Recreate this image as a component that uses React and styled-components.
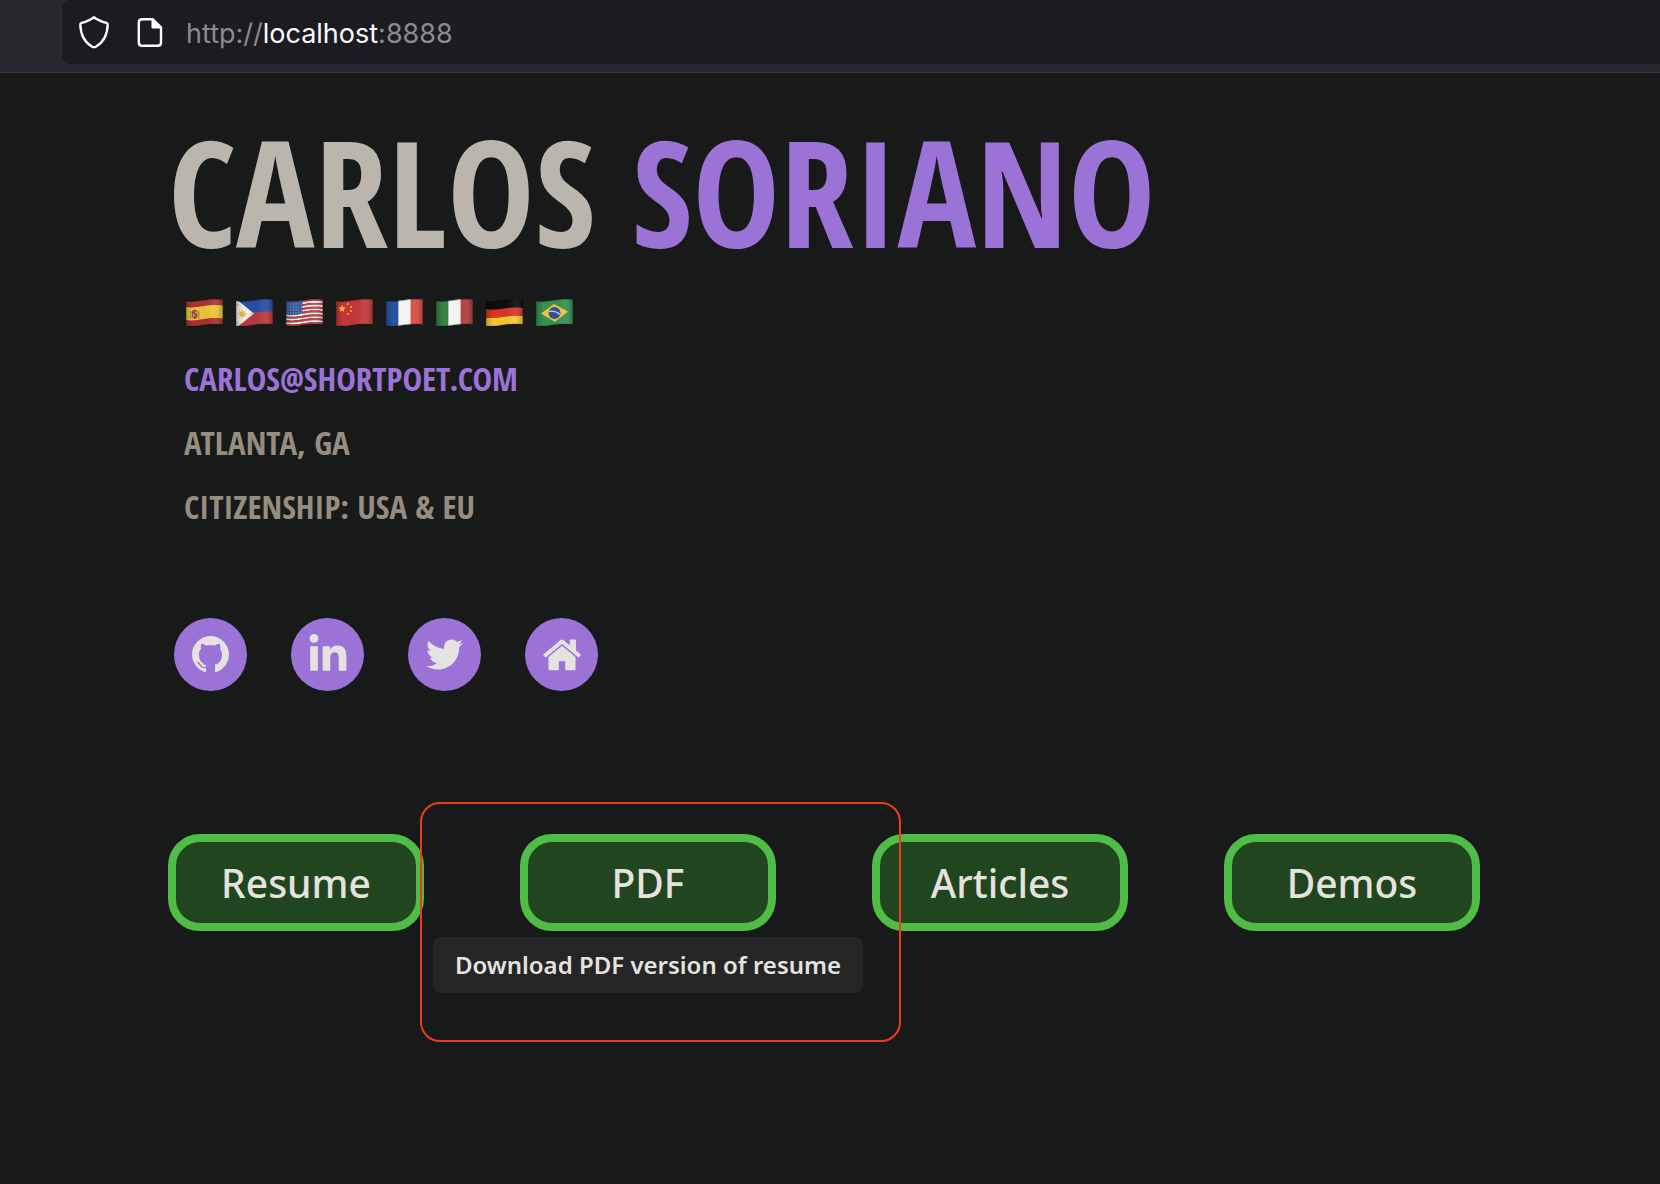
import React from "react";
import styled, { createGlobalStyle } from "styled-components";
import { FaLinkedinIn, FaTwitter } from "react-icons/fa";

const condensed = `"Saira Extra Condensed", "Open Sans Condensed", "Liberation Sans Narrow", sans-serif`;
const humanist = `"Noto Sans", "Open Sans", sans-serif`;

const GlobalStyle = createGlobalStyle`
  * { box-sizing: border-box; }
  body {
    margin: 0;
    background: #181a19;
    color: #e5e2df;
    font-family: ${humanist};
  }
`;

const Toolbar = styled.div`
  display: flex;
  height: 73px;
  padding: 0 0 8px 62px;
  background: #28272e;
  border-bottom: 1px solid #39383e;
`;

const AddressBar = styled.div`
  display: flex;
  flex: 1;
  align-items: center;
  gap: 24px;
  padding: 0 16px;
  background: #1c1b20;
  border-radius: 8px 0 0 8px;
`;

const PageInfo = styled.div`
  display: flex;
  align-items: center;
  gap: 20px;
`;

const ToolIcon = styled.svg`
  display: block;
  width: 32px;
  height: 36px;
  fill: none;
  stroke: #fbfbfe;
  stroke-width: 2;
  stroke-linejoin: round;
`;

const Address = styled.span`
  padding-top: 4px;
  font: 400 27px/36px Inter, "Liberation Sans", sans-serif;
  color: #8b8b8f;

  strong {
    font-weight: 400;
    color: #fbfbfe;
  }
`;

const Page = styled.main`
  padding: 36px 180px 140px 168px;
`;

const Name = styled.h1`
  margin: 0;
  font: 800 147px/164px ${condensed};
  color: #bab5ad;
  white-space: nowrap;
`;

const Surname = styled.span`
  color: #9b72d6;
`;

const Flags = styled.ul`
  display: flex;
  gap: 13px;
  margin: 26px 0 21px;
  padding: 0 18px;
  list-style: none;
`;

const FlagIcon = styled.svg`
  display: block;
  width: 37px;
  height: 27px;
`;

const Details = styled.address`
  display: flex;
  flex-direction: column;
  align-items: flex-start;
  padding: 0 16px;
  font: 400 33px/64px ${condensed};
  color: #968d81;
`;

const Email = styled.a`
  color: #9b72d6;
  text-decoration: none;
`;

const Socials = styled.nav`
  display: flex;
  gap: 44px;
  margin: 79px 0 143px;
  padding: 0 6px;
`;

const SocialLink = styled.a`
  display: grid;
  place-items: center;
  width: 73px;
  height: 73px;
  border-radius: 50%;
  background: #9b72d6;
  color: #e5e3df;
  font-size: ${(p) => p.$size}px;

  svg {
    display: block;
  }
`;

const Actions = styled.nav`
  display: flex;
  justify-content: space-between;
`;

const ActionSlot = styled.div`
  position: relative;
`;

const ActionLink = styled.a`
  display: block;
  width: 256px;
  border: 8px solid #4fbc46;
  border-radius: 32px;
  padding: 13px 0 12px;
  background: #21451f;
  color: #e5e2df;
  font-size: 39px;
  font-weight: 500;
  line-height: 56px;
  text-align: center;
  text-decoration: none;
`;

const Tooltip = styled.span`
  position: absolute;
  top: calc(100% + 6px);
  left: 50%;
  transform: translateX(-50%);
  padding: 10px 22px;
  border-radius: 8px;
  background: #242527;
  color: #e5e2df;
  font-size: 24px;
  font-weight: 600;
  line-height: 36px;
  white-space: nowrap;
`;

const Highlight = styled.span`
  position: absolute;
  inset: -32px -125px -111px -100px;
  border: 2px solid #ee3b1b;
  border-radius: 20px;
  pointer-events: none;
  z-index: 1;
`;

// A strip of cloth between two heights, both edges following the flag's wave.
const band = (top, bottom, left = 0, right = 37) =>
  `M${left} ${top + 2}` +
  `C${left + (right - left) * 0.34} ${top + 4} ${left + (right - left) * 0.56} ${top - 1.6} ${right} ${top + 0.6}` +
  `V${bottom + 0.6}` +
  `C${left + (right - left) * 0.56} ${bottom - 1.6} ${left + (right - left) * 0.34} ${bottom + 4} ${left} ${bottom + 2}Z`;

const rows = (colors) =>
  colors.map((c, i) => (
    <path key={i} d={band((25 * i) / colors.length, (25 * (i + 1)) / colors.length)} fill={c} />
  ));

const columns = (colors) =>
  colors.map((c, i) => <rect key={i} x={(37 * i) / 3} y="0" width="12.6" height="28" fill={c} />);

const usStripes = Array.from({ length: 13 }, (_, i) => (i % 2 ? "#f4f2f2" : "#c93a42"));

const flags = [
  {
    name: "Spain",
    art: (
      <>
        <path d={band(0, 25)} fill="#a93232" />
        <path d={band(6, 19)} fill="#edc63b" />
        <path d="M4 12h1.500v8H4zM12 12h1.500v8H12z" fill="#b98f6a" />
        <path d="M6 12q2.800-3 5.500 0v6q-2.700 4-5.500 0z" fill="#a4483c" />
        <path d="M9 12.500h1.700v2H9zM6.800 15.500h1.700v2H6.800z" fill="#c9b9a4" />
      </>
    ),
  },
  {
    name: "Philippines",
    art: (
      <>
        <path d={band(0, 13)} fill="#274fa8" />
        <path d={band(12.5, 25)} fill="#bd3840" />
        <path d="M0 0L18 14.500 0 29z" fill="#f3f0ec" />
        <circle cx="6.500" cy="15" r="2.600" fill="#e9b63a" />
        <path d="M6.500 10.500v9M2 15h9M3.300 11.800l6.400 6.400M9.700 11.800l-6.400 6.400" stroke="#e9b63a" strokeWidth="0.9" />
        <circle cx="1.800" cy="5.500" r="1" fill="#e9b63a" />
        <circle cx="1.800" cy="24.500" r="1" fill="#e9b63a" />
        <circle cx="15.500" cy="14.500" r="1" fill="#e9b63a" />
      </>
    ),
  },
  {
    name: "United States",
    art: (
      <>
        {rows(usStripes)}
        <path d="M0 0H16.500V14.600Q8 17 0 15.800z" fill="#325a9c" />
        <path
          d="M1.500 5H16M1.500 8H16M1.500 11H16M1.500 14H16"
          stroke="#a9bedb"
          strokeWidth="1"
          strokeDasharray="1 1.700"
        />
      </>
    ),
  },
  {
    name: "China",
    art: (
      <>
        <path d={band(0, 25)} fill="#c4373a" />
        <path d="M6 5.800l1 2.600 2.700.1-2.100 1.700.7 2.700L6 11.400l-2.300 1.500.7-2.700-2.100-1.700 2.700-.1z" fill="#f6d33c" />
        <g fill="#f0b83a">
          <circle cx="12" cy="5" r="1" />
          <circle cx="15" cy="8" r="1" />
          <circle cx="15" cy="12" r="1" />
          <circle cx="12" cy="15" r="1" />
        </g>
      </>
    ),
  },
  { name: "France", art: columns(["#27549f", "#fbfafa", "#dc4a3e"]) },
  { name: "Italy", art: columns(["#388349", "#fbfafa", "#b03b3d"]) },
  { name: "Germany", art: rows(["#0c0c0c", "#dc3426", "#f5c832"]) },
  {
    name: "Brazil",
    art: (
      <>
        <path d={band(0, 25)} fill="#36914f" />
        <path d="M5 14.500L18 5l14 7.500L19 23z" fill="#f2c43b" />
        <circle cx="18.500" cy="14" r="6" fill="#33509c" />
        <path d="M13 12.500q6-1.500 11 3" fill="none" stroke="#c4d6d8" strokeWidth="1.300" />
      </>
    ),
  },
];

function Flag({ name, index, children }) {
  const id = `cloth-${index}`;
  return (
    <FlagIcon viewBox="0 0 37 27" role="img" aria-label={name}>
      <defs>
        <clipPath id={id}>
          <path d={band(0, 25)} />
        </clipPath>
        <linearGradient id={`${id}-shade`}>
          <stop offset="0" stopColor="#000" stopOpacity="0.22" />
          <stop offset="0.2" stopColor="#000" stopOpacity="0" />
          <stop offset="0.5" stopColor="#000" stopOpacity="0.03" />
          <stop offset="0.75" stopColor="#fff" stopOpacity="0.06" />
          <stop offset="1" stopColor="#000" stopOpacity="0.25" />
        </linearGradient>
      </defs>
      <g clipPath={`url(#${id})`}>
        {children}
        <rect width="37" height="28" fill={`url(#${id}-shade)`} />
        <path d={band(0, 25)} fill="none" stroke="#000" strokeOpacity="0.25" strokeWidth="1.500" />
      </g>
    </FlagIcon>
  );
}

// The cat's silhouette and its tail are cut out of the disc in the link's own colour.
function GithubIcon(props) {
  return (
    <svg width="1em" height="1em" viewBox="0 0 37 37" fill="currentColor" {...props}>
      <circle cx="18.500" cy="18.500" r="18.500" />
      <g fill="#9b72d6">
        <path d="M14 37.500V28.600C9.800 27.600 7 24.600 7 18.800C7 16.200 7.600 14.300 9 12.700C8.500 11.200 8.500 9.400 9.300 7.700C11 7.700 12.600 8.500 14 9.500Q18.500 8.500 23 9.500C24.400 8.500 26 7.700 27.700 7.700C28.500 9.400 28.500 11.200 28 12.700C29.400 14.300 30 16.200 30 18.800C30 24.600 27.200 27.600 23 28.600V37.500Z" />
        <path
          d="M5.300 26.200C7.800 26.500 8 30.600 11 31.400Q12.500 31.800 15 31.400"
          fill="none"
          stroke="#9b72d6"
          strokeWidth="1.400"
        />
        <path d="M10.600 28.200Q12.500 29 15 28.500V27H13Z" />
      </g>
    </svg>
  );
}

function HomeIcon(props) {
  return (
    <svg width="1em" height="1em" viewBox="0 0 38 38" fill="currentColor" {...props}>
      <path d="M0.600 18.200L17.600 3.900Q19 2.900 20.400 3.900L26.700 9.200V4.200Q26.700 3.500 27.400 3.500H32.300Q33 3.500 33 4.200V14.500L37.400 18.200Q38 18.800 37.500 19.400L36 21.100Q35.400 21.600 34.800 21.100L19 8 3.200 21.100Q2.600 21.600 2 21.100L0.500 19.400Q0 18.800 0.600 18.200Z" />
      <path d="M19 9.800L32.500 21V33Q32.500 34.200 31.300 34.200H22.200V25.200H15.800V34.200H6.700Q5.500 34.200 5.500 33V21Z" />
    </svg>
  );
}

const socials = [
  { label: "GitHub", href: "#github", Icon: GithubIcon, size: 37 },
  { label: "LinkedIn", href: "#linkedin", Icon: FaLinkedinIn, size: 42 },
  { label: "Twitter", href: "#twitter", Icon: FaTwitter, size: 37 },
  { label: "Home", href: "#home", Icon: HomeIcon, size: 38 },
];

const actions = [
  { label: "Resume" },
  { label: "PDF", tip: "Download PDF version of resume" },
  { label: "Articles" },
  { label: "Demos" },
];

export default function App() {
  return (
    <>
      <GlobalStyle />
      <Toolbar>
        <AddressBar>
          <ToolIcon viewBox="0 0 32 36" aria-hidden="true">
            <path
              strokeWidth="2.400"
              d="M16 3.200C12.500 6 7 8 3.600 8.900Q2.200 9.300 2.300 10.800C2.700 21 7.500 29 14.200 32.700Q16 33.600 17.800 32.700C24.500 29 29.300 21 29.700 10.800Q29.800 9.300 28.400 8.900C25 8 19.500 6 16 3.200Z"
            />
          </ToolIcon>
          <PageInfo>
            <ToolIcon viewBox="0 0 32 36" aria-hidden="true">
              <path
                strokeWidth="2.400"
                d="M8 5.200H18.500L27 13.500V28.500Q27 31.800 23.700 31.800H8Q4.800 31.800 4.800 28.500V8.500Q4.800 5.200 8 5.200Z"
              />
              <path d="M18.500 5.200V13.500H27Z" fill="#fbfbfe" />
            </ToolIcon>
            <Address>
              http://<strong>localhost</strong>:8888
            </Address>
          </PageInfo>
        </AddressBar>
      </Toolbar>
      <Page>
        <Name>
          CARLOS <Surname>SORIANO</Surname>
        </Name>
        <Flags>
          {flags.map((flag, i) => (
            <li key={flag.name}>
              <Flag name={flag.name} index={i}>
                {flag.art}
              </Flag>
            </li>
          ))}
        </Flags>
        <Details>
          <Email href="mailto:carlos@shortpoet.com">CARLOS@SHORTPOET.COM</Email>
          <span>ATLANTA, GA</span>
          <span>CITIZENSHIP: USA &amp; EU</span>
        </Details>
        <Socials aria-label="Profiles">
          {socials.map(({ label, href, Icon, size }) => (
            <SocialLink key={label} href={href} aria-label={label} $size={size}>
              <Icon aria-hidden="true" />
            </SocialLink>
          ))}
        </Socials>
        <Actions aria-label="Sections">
          {actions.map(({ label, tip }) => (
            <ActionSlot key={label}>
              <ActionLink href={`#${label.toLowerCase()}`} aria-describedby={tip ? "pdf-tip" : undefined}>
                {label}
              </ActionLink>
              {tip && (
                <>
                  <Tooltip id="pdf-tip" role="tooltip">
                    {tip}
                  </Tooltip>
                  <Highlight aria-hidden="true" />
                </>
              )}
            </ActionSlot>
          ))}
        </Actions>
      </Page>
    </>
  );
}
